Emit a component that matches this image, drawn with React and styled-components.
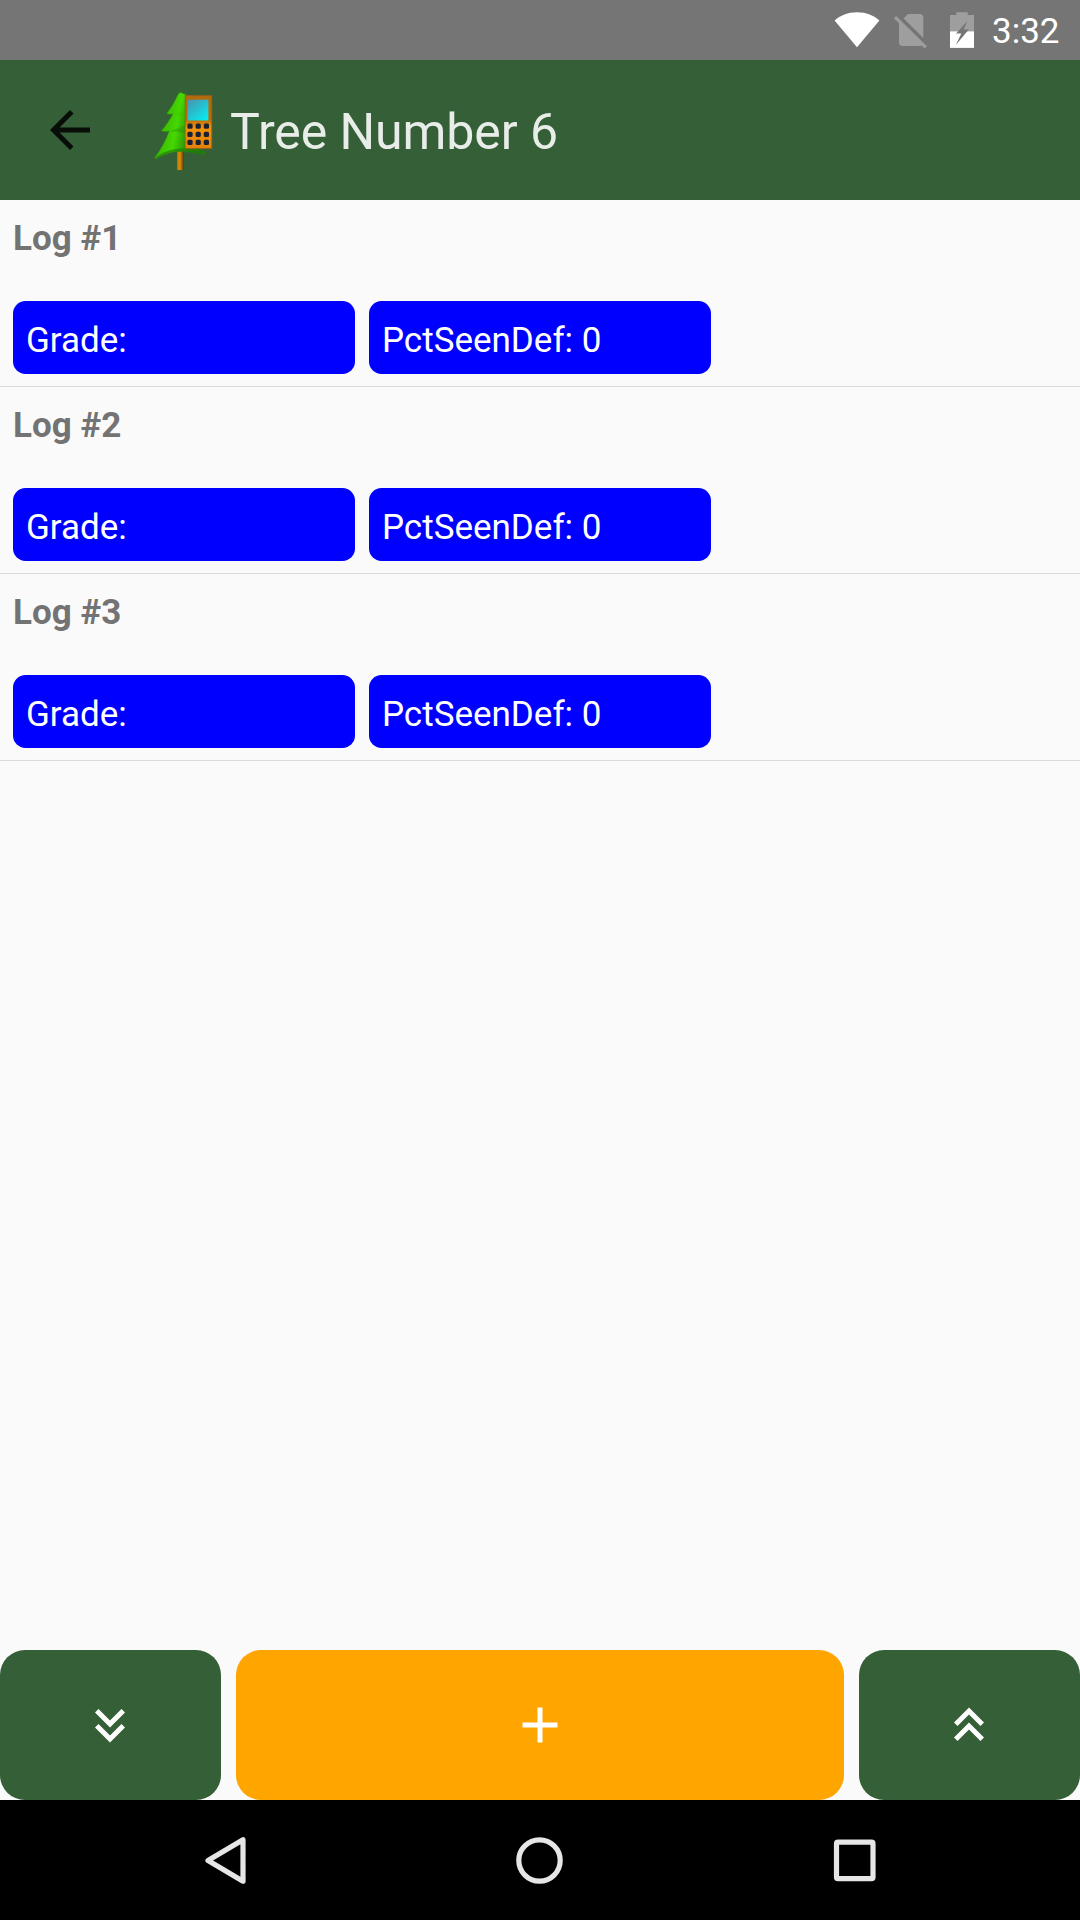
import React from "react";
import styled, { createGlobalStyle } from "styled-components";

const GlobalStyle = createGlobalStyle`
  * { box-sizing: border-box; }
  body {
    margin: 0;
    background: #fafafa;
    font-family: Roboto, "Noto Sans", sans-serif;
  }
`;

const Screen = styled.div`
  width: 1080px;
  height: 1920px;
  display: flex;
  flex-direction: column;
  background: #fafafa;
  overflow: hidden;
`;

const StatusBar = styled.header`
  height: 60px;
  flex: none;
  display: flex;
  align-items: center;
  justify-content: flex-end;
  padding-right: 18px;
  background: #757575;
`;

const StatusIcons = styled.svg`
  width: 150px;
  height: 60px;
  display: block;
`;

const Clock = styled.span`
  width: 70px;
  margin-left: 12px;
  padding-top: 3px;
  font-size: 35px;
  line-height: 57px;
  color: #fff;
  white-space: nowrap;
`;

const Toolbar = styled.div`
  height: 140px;
  flex: none;
  display: flex;
  align-items: center;
  padding: 0 40px;
  background: #355f36;
`;

const BackButton = styled.button`
  width: 60px;
  height: 60px;
  padding: 0;
  border: 0;
  background: none;
  color: #080d08;
`;

const Logo = styled.svg`
  width: 80px;
  height: 80px;
  margin: 0 0 1px 45px;
`;

const Title = styled.h1`
  margin: 3px 0 0 5px;
  font-size: 50px;
  font-weight: 400;
  line-height: 60px;
  letter-spacing: -0.08px;
  color: #e9ede9;
`;

const LogList = styled.main`
  flex: 1;
`;

const LogRow = styled.section`
  height: 187px;
  padding: 18px 13px 0;
  border-bottom: 1px solid #dadada;
`;

const LogName = styled.h2`
  height: 83px;
  margin: 0;
  font-size: 35px;
  font-weight: 700;
  line-height: 42px;
  color: #737373;
`;

const Fields = styled.div`
  display: flex;
  gap: 14px;
`;

const Field = styled.div`
  width: 342px;
  height: 73px;
  padding: 4px 13px 0;
  border-radius: 12.5px;
  background: #0000ff;
  color: #fff;
  font-size: 35px;
  line-height: 72px;
  white-space: nowrap;
`;

const Actions = styled.footer`
  height: 150px;
  flex: none;
  display: flex;
  gap: 15px;
`;

const ActionButton = styled.button`
  flex: ${(p) => (p.$wide ? "1" : "none")};
  width: 221px;
  padding: 0 ${(p) => (p.$wide ? "0" : "1px")} 0 0;
  border: 0;
  border-radius: 25px;
  display: flex;
  align-items: center;
  justify-content: center;
  background: ${(p) => (p.$wide ? "#ffa500" : "#355f36")};
  color: #fff;
`;

const Icon = styled.svg`
  width: 60px;
  height: 60px;
  display: block;
  fill: currentColor;
`;

const NavBar = styled.nav`
  height: 120px;
  flex: none;
  display: flex;
  padding: 0 68px 0 67px;
  background: #000;
`;

const NavButton = styled.button`
  flex: 1;
  padding: 0;
  border: 0;
  background: none;
  display: flex;
  align-items: center;
  justify-content: center;
`;

const NavIcon = styled.svg`
  width: 60px;
  height: 60px;
  fill: none;
  stroke: #e6e6e6;
  stroke-width: 5.2;
  stroke-linejoin: round;
`;

const logs = [1, 2, 3];

function StatusGlyphs() {
  return (
    <StatusIcons viewBox="830 0 150 60">
      <path fill="#fff" d="M834.6 20.4C840 15.6 848 12.3 857 12.3s17 3.3 22.4 8.1L857 47.2z" />
      <path
        fill="#9e9e9e"
        d="M923.3 38.1V17.2c0-1.7-1.4-3.1-3.1-3.1h-12.3l-4.2 4.3zM896.2 16l-2.2 2.2 5 5v19.5c0 1.8 1.4 3.2 3.1 3.2h18.3c.5 0 1-.1 1.5-.4l2.8 2.9 2.2-2.2z"
      />
      <path fill="#9e9e9e" d="M950 31.3V15h6.3v-2.8h11.4V15h6.3v16.3z" />
      <path fill="#fff" d="M950 31.3h24V47.9h-24z" />
      <path fill="#757575" d="M967.6 21 956 33.6h5.3L955.8 45l13-15.6h-5.3z" />
    </StatusIcons>
  );
}

function TreeLogo() {
  const keys = [];
  for (let r = 0; r < 3; r++) {
    for (let c = 0; c < 3; c++) {
      keys.push([187.4 + c * 8.2, 123.6 + r * 8.1]);
    }
  }
  return (
    <Logo viewBox="145 90 80 80">
      <defs>
        <linearGradient id="leaf" x1="0" y1="0" x2="1" y2="0.25">
          <stop offset="0" stopColor="#2f9a05" />
          <stop offset="0.3" stopColor="#3cbd02" />
          <stop offset="0.52" stopColor="#46d800" />
          <stop offset="0.75" stopColor="#2c9a04" />
          <stop offset="1" stopColor="#237a0c" />
        </linearGradient>
        <linearGradient id="shade" x1="0" y1="0" x2="0" y2="1">
          <stop offset="0" stopColor="#1f7a08" stopOpacity="0" />
          <stop offset="1" stopColor="#1f7a08" stopOpacity="0.75" />
        </linearGradient>
        <linearGradient id="trunk" x1="0" x2="1">
          <stop offset="0" stopColor="#c87c00" />
          <stop offset="0.45" stopColor="#dc8c00" />
          <stop offset="1" stopColor="#593b10" />
        </linearGradient>
        <linearGradient id="screen" x1="0" y1="0" x2="0.8" y2="1">
          <stop offset="0" stopColor="#4c91ac" />
          <stop offset="1" stopColor="#05eaf0" />
        </linearGradient>
        <linearGradient id="body" x1="0" y1="0" x2="0" y2="1">
          <stop offset="0" stopColor="#b16a0d" />
          <stop offset="0.45" stopColor="#b96d08" />
          <stop offset="0.6" stopColor="#f4920c" />
          <stop offset="1" stopColor="#e58009" />
        </linearGradient>
      </defs>
      <path fill="url(#trunk)" d="M177.2 147h6.4v23h-6.4z" />
      <path
        fill="url(#leaf)"
        stroke="#2a7a1c"
        strokeWidth="0.6"
        d="M180.4 92.2c-1.8.6-3 3-4.2 5.6-2.4 5.2-5.6 10.8-9.8 15.6 2.1 1.2 4 1 6.2.6-2.8 5.7-6.6 11.4-11.6 16.8 2.2 1.2 5.2 1.2 8 .4-3.4 9.3-8.600 18.300-14.400 26.400.1 1.100.8 1.400 2 1 7-4 15-7 23.400-7 9.500-.2 16.500 2.100 24.800 3.300.9-.5 1.100-1.400.6-2.400L187 140V95z"
      />
      <path fill="url(#shade)" d="M172.6 114c4-.8 7.8-2.400 12.400-4.600v6.200c-4 1-8-1-12.400-1.600zM169 131.200c5.600-1.300 10.600-3.200 16-6.200v8.200c-5-1-10-2.200-16-2zM155 158c8-6 17-9.500 26-9.500 9 0 16 2 24 4v2c-8-1.200-16-3.500-25-3.300-8.400 0-16.400 3-23.400 7z" />
      <path fill="url(#body)" stroke="#965d16" strokeWidth="0.8" d="M185.2 95.600h26.600v53h-26.600z" />
      <path fill="url(#screen)" d="M187.6 99.700h20.800v20.800h-20.800z" />
      <g fill="#182133">
        {keys.map(([x, y]) => (
          <rect key={`${x}-${y}`} x={x} y={y} width="5.200" height="5.200" rx="1.500" />
        ))}
      </g>
    </Logo>
  );
}

export default function App() {
  return (
    <>
      <GlobalStyle />
      <Screen>
        <StatusBar>
          <StatusGlyphs />
          <Clock>3:32</Clock>
        </StatusBar>
        <Toolbar>
          <BackButton aria-label="Back">
            <Icon viewBox="0 0 24 24">
              <path d="M20 11H7.83l5.59-5.59L12 4l-8 8 8 8 1.41-1.41L7.83 13H20z" />
            </Icon>
          </BackButton>
          <TreeLogo />
          <Title>Tree Number 6</Title>
        </Toolbar>
        <LogList>
          {logs.map((n) => (
            <LogRow key={n}>
              <LogName>Log #{n}</LogName>
              <Fields>
                <Field>Grade:</Field>
                <Field>PctSeenDef: 0</Field>
              </Fields>
            </LogRow>
          ))}
        </LogList>
        <Actions>
          <ActionButton aria-label="Last log">
            <Icon viewBox="0 0 24 24">
              <path d="M16.59 5.59 18 7l-6 6-6-6 1.41-1.41L12 10.17zM16.59 11.59 18 13l-6 6-6-6 1.41-1.41L12 16.17z" />
            </Icon>
          </ActionButton>
          <ActionButton $wide aria-label="Add log">
            <Icon viewBox="0 0 24 24">
              <path d="M19 13h-6v6h-2v-6H5v-2h6V5h2v6h6z" />
            </Icon>
          </ActionButton>
          <ActionButton aria-label="First log">
            <Icon viewBox="0 0 24 24">
              <path d="M7.41 18.41 6 17l6-6 6 6-1.41 1.41L12 13.83zM7.41 12.41 6 11l6-6 6 6-1.41 1.41L12 7.83z" />
            </Icon>
          </ActionButton>
        </Actions>
        <NavBar>
          <NavButton aria-label="Back">
            <NavIcon viewBox="0 0 60 60">
              <path d="M13 30.500 48 9.800v41.400z" />
            </NavIcon>
          </NavButton>
          <NavButton aria-label="Home">
            <NavIcon viewBox="0 0 60 60">
              <circle cx="29.5" cy="30.5" r="20.7" />
            </NavIcon>
          </NavButton>
          <NavButton aria-label="Overview">
            <NavIcon viewBox="0 0 60 60">
              <rect x="11.5" y="12.2" width="36.5" height="36.5" rx="1.5" />
            </NavIcon>
          </NavButton>
        </NavBar>
      </Screen>
    </>
  );
}
